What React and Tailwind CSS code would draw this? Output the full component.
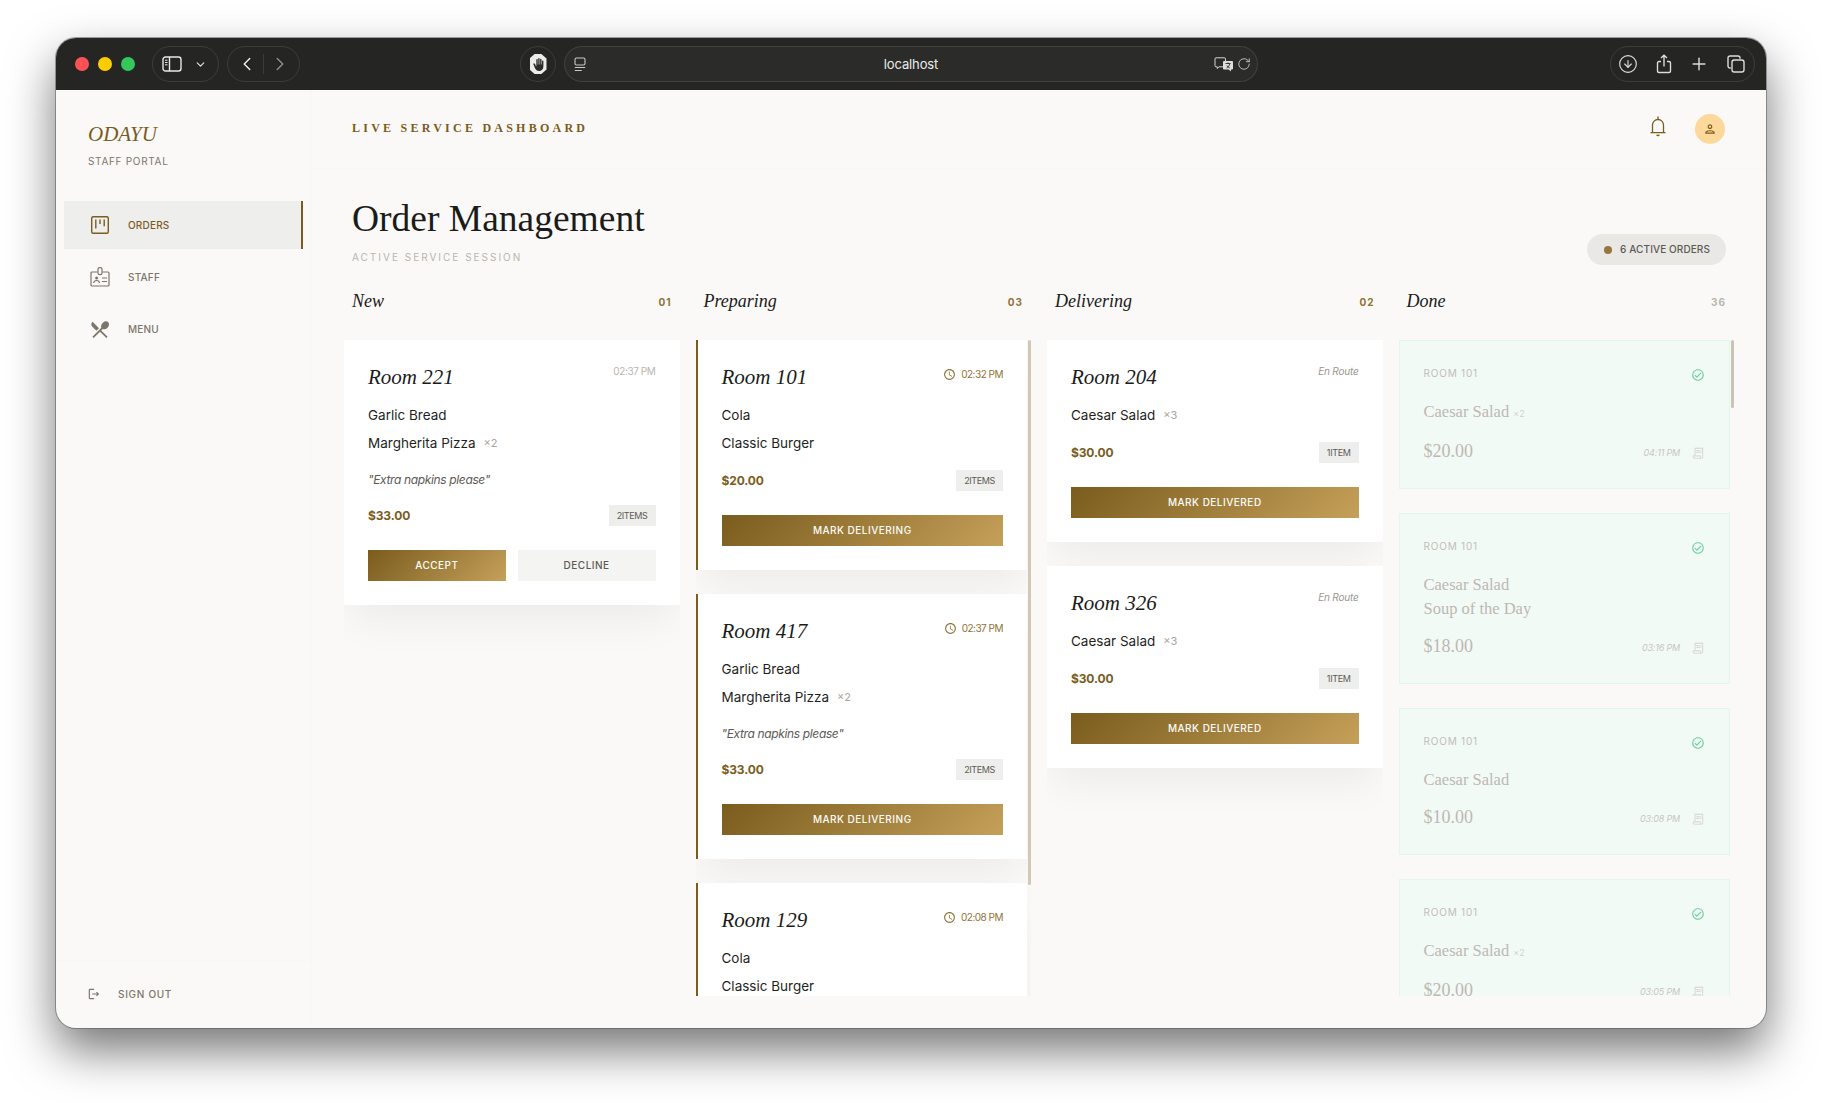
import React from "react";
import {
  ChevronDown,
  ChevronLeft,
  ChevronRight,
  CircleArrowDown,
  Plus,
  RotateCw,
} from "lucide-react";
import {
  MdBackHand,
  MdOutlineCheckCircle,
  MdOutlineLogout,
  MdOutlinePerson,
  MdOutlineReceiptLong,
  MdOutlineSchedule,
  MdRestaurantMenu,
} from "react-icons/md";

const serif = "font-['Liberation_Serif',serif]";

const KanbanIcon = () => (
  <svg width="20" height="20" viewBox="0 0 20 20" fill="none" stroke="currentColor">
    <rect x="1.7" y="1.7" width="16.6" height="16.6" rx="1.5" strokeWidth="1.4" />
    <path d="M5.8 4.6v9M10 4.6v4.4M14.2 4.6v6.6" strokeWidth="1.4" />
  </svg>
);

const BadgeIcon = () => (
  <svg width="22" height="22" viewBox="0 0 22 22" fill="none" stroke="currentColor" strokeWidth="1.2">
    <path d="M8.5 6H3a1 1 0 0 0-1 1v12a1 1 0 0 0 1 1h16a1 1 0 0 0 1-1V7a1 1 0 0 0-1-1h-5.5" />
    <rect x="9" y="1.6" width="4" height="7" rx="1.6" />
    <circle cx="7.6" cy="12" r="1.5" fill="currentColor" stroke="none" />
    <path d="M4.6 17c.3-1.8 1.5-2.5 3-2.5s2.700.7 3 2.500M13 12h5M13 15.500h5" />
  </svg>
);

const BellIcon = () => (
  <svg width="16" height="21" viewBox="0 0 16 21" fill="none" stroke="#7a5c1e" strokeWidth="1.300">
    <path d="M.5 16.700h15M2.500 16.700V9a5.500 5.500 0 0 1 11 0v7.700" />
    <path d="M8 1v2.400" strokeLinecap="round" />
    <path d="M6.800 18.800a1.300 1.300 0 0 0 2.400 0" strokeWidth="1.500" />
  </svg>
);

const SidebarIcon = () => (
  <svg width="20" height="16" viewBox="0 0 20 16" fill="none" stroke="#e8e8e6" strokeWidth="1.4">
    <rect x="1" y="1" width="18" height="14" rx="2.500" />
    <path d="M7.500 1v14" />
    <path d="M3 4.200h2.500M3 6.500h2.500M3 8.800h2.500" strokeWidth="1" />
  </svg>
);

const ReaderIcon = () => (
  <svg width="12" height="15" viewBox="0 0 12 15" fill="none" stroke="#c9c9c6" strokeWidth="1.100">
    <rect x="1" y="1" width="10" height="7" rx="1.500" />
    <path d="M.8 10.500h10.400M.8 13.500h7" />
  </svg>
);

const TranslateIcon = () => (
  <svg width="20" height="15" viewBox="0 0 20 15">
    <path d="M2 .8h8.500a1 1 0 0 1 1 1v7a1 1 0 0 1-1 1H5L3.200 11.500V9.800H2a1 1 0 0 1-1-1v-7a1 1 0 0 1 1-1z" fill="none" stroke="#d6d6d3" strokeWidth="1" />
    <path d="M10 4h8a1 1 0 0 1 1 1v6.500a1 1 0 0 1-1 1h-1v2l-2.300-2H10a1 1 0 0 1-1-1V5a1 1 0 0 1 1-1z" fill="#dededb" />
    <path d="M11.500 6.500h5M14 5.500v1M12.500 11c2-1 3-2.500 3.200-4.500M12.800 8.500c.6 1 1.600 1.900 3 2.500" fill="none" stroke="#2a2a28" strokeWidth=".9" />
  </svg>
);

const ShareIcon = () => (
  <svg width="16" height="20" viewBox="0 0 16 20" fill="none" stroke="#dcdcd9" strokeWidth="1.400">
    <path d="M5 7.500H3a1.500 1.500 0 0 0-1.500 1.500v8A1.500 1.500 0 0 0 3 18.500h10a1.500 1.500 0 0 0 1.500-1.500V9A1.500 1.500 0 0 0 13 7.500h-2" />
    <path d="M8 12.500V1.300M5 4l3-2.800L11 4" />
  </svg>
);

const TabsIcon = () => (
  <svg width="18" height="18" viewBox="0 0 18 18" fill="none" stroke="#dcdcd9" strokeWidth="1.400">
    <path d="M3.800 13H3a2 2 0 0 1-2-2V3a2 2 0 0 1 2-2h8a2 2 0 0 1 2 2v.800" />
    <rect x="5" y="5" width="12" height="12" rx="2.200" />
  </svg>
);

const HandIcon = () => (
  <span className="flex h-[20px] w-[17px] items-center justify-center bg-[#ececea] [clip-path:polygon(30%_0,70%_0,100%_22%,100%_78%,70%_100%,30%_100%,0_78%,0_22%)]">
    <MdBackHand size={13} color="#2a2a28" />
  </span>
);

const newOrders = [
  {
    room: "Room 221",
    time: "02:37 PM",
    items: [["Garlic Bread"], ["Margherita Pizza", "×2"]],
    note: "\"Extra napkins please\"",
    price: "$33.00",
    count: "2ITEMS",
  },
];

const preparing = [
  {
    room: "Room 101",
    time: "02:32 PM",
    items: [["Cola"], ["Classic Burger"]],
    price: "$20.00",
    count: "2ITEMS",
  },
  {
    room: "Room 417",
    time: "02:37 PM",
    items: [["Garlic Bread"], ["Margherita Pizza", "×2"]],
    note: "\"Extra napkins please\"",
    price: "$33.00",
    count: "2ITEMS",
  },
  {
    room: "Room 129",
    time: "02:08 PM",
    items: [["Cola"], ["Classic Burger"]],
    price: "$20.00",
    count: "2ITEMS",
  },
];

const delivering = [
  { room: "Room 204", items: [["Caesar Salad", "×3"]], price: "$30.00", count: "1ITEM" },
  { room: "Room 326", items: [["Caesar Salad", "×3"]], price: "$30.00", count: "1ITEM" },
];

const done = [
  { lines: [["Caesar Salad", "×2"]], price: "$20.00", time: "04:11 PM" },
  { lines: [["Caesar Salad"], ["Soup of the Day"]], price: "$18.00", time: "03:16 PM" },
  { lines: [["Caesar Salad"]], price: "$10.00", time: "03:08 PM" },
  { lines: [["Caesar Salad", "×2"]], price: "$20.00", time: "03:05 PM" },
];

function Gold({ children, className = "" }) {
  return (
    <button className={`h-[31px] bg-[linear-gradient(135deg,#7a5c1e,#c5a059)] text-[10px] font-medium tracking-[0.05em] text-[#fdfcf9] ${className}`}>
      {children}
    </button>
  );
}

function OrderCard({ order, variant }) {
  return (
    <div className={`shrink-0 bg-white shadow-[0_20px_40px_-6px_rgba(0,0,0,0.06)] p-6 ${variant === "preparing" ? "border-l-2 border-[#7a5c1e]" : ""}`}>
      <div className="flex items-start justify-between">
        <h3 className={`${serif} mt-px text-[21px] italic leading-6 text-[#1b1b1a]`}>{order.room}</h3>
        {variant === "new" && (
          <span className="text-[10px] leading-[15px] tracking-[-0.04em] text-[#b9b5ae]">{order.time}</span>
        )}
        {variant === "preparing" && (
          <span className="mt-[3px] flex items-center gap-[5px] text-[10px] leading-[15px] tracking-[-0.05em] text-[#8f7338]">
            <MdOutlineSchedule size={13} />
            {order.time}
          </span>
        )}
        {variant === "delivering" && (
          <span className="text-[10px] italic leading-[15px] tracking-[-0.02em] text-[#9b968e]">En Route</span>
        )}
      </div>
      <div className="mt-[16px] flex flex-col gap-2">
        {order.items.map(([name, qty]) => (
          <div key={name} className="flex items-center gap-2 text-[13.500px] leading-5 text-[#1f1f1e]">
            {name}
            {qty && <span className="text-[11px] text-[#a8a49d]">{qty}</span>}
          </div>
        ))}
      </div>
      {order.note && (
        <p className="mt-[19px] text-xs italic leading-4 tracking-[-0.03em] text-[#5c5a55]">{order.note}</p>
      )}
      <div className="mt-[17px] flex items-center justify-between">
        <span className="text-xs font-bold tracking-[-0.01em] text-[#7a5c1e]">{order.price}</span>
        <span className="flex h-[21px] items-center bg-[#eeeeec] px-2 text-[9px] tracking-[-0.04em] text-[#5c5a55]">{order.count}</span>
      </div>
      {variant === "new" && (
        <div className="mt-6 grid grid-cols-2 gap-3">
          <Gold>ACCEPT</Gold>
          <button className="h-[31px] bg-[#f4f4f2] text-[10px] font-medium tracking-[0.05em] text-[#5c5a55]">DECLINE</button>
        </div>
      )}
      {variant === "preparing" && <Gold className="mt-6 w-full">MARK DELIVERING</Gold>}
      {variant === "delivering" && <Gold className="mt-6 w-full">MARK DELIVERED</Gold>}
    </div>
  );
}

function DoneCard({ card }) {
  return (
    <div className="shrink-0 border border-[#e2f6ec] bg-[#f2faf6] px-6 pt-[25px] pb-[23px]">
      <div className="flex h-[15px] items-start justify-between">
        <span className="text-[10px] leading-[15px] tracking-[0.08em] text-[#c2bdb7]">ROOM 101</span>
        <MdOutlineCheckCircle size={14} className="mt-[2px] text-[#6fd0a3]" />
      </div>
      <div className="mt-[19px]">
        {card.lines.map(([name, qty]) => (
          <div key={name} className={`${serif} text-[16.500px] leading-6 text-[#bdb8b2]`}>
            {name}
            {qty && <span className="ml-1 font-['Inter',sans-serif] text-[9px] text-[#d5d2cd]">{qty}</span>}
          </div>
        ))}
      </div>
      <div className="mt-[11px] flex items-center justify-between">
        <span className={`${serif} text-lg leading-7 text-[#bdb8b2]`}>{card.price}</span>
        <span className="mt-1 flex items-center gap-[11px]">
          <span className="text-[9px] italic tracking-[-0.02em] text-[#c9c5bf]">{card.time}</span>
          <MdOutlineReceiptLong size={14} className="text-[#dcdcd6]" />
        </span>
      </div>
    </div>
  );
}

function ColumnHead({ title, count, muted }) {
  return (
    <div className="flex items-center justify-between px-2">
      <h2 className={`${serif} text-lg italic leading-6 text-[#1b1b1a]`}>{title}</h2>
      <span className={`mt-[3px] text-[10px] font-bold tracking-[0.1em] ${muted ? "text-[#b9b5ae]" : "text-[#8f7338]"}`}>{count}</span>
    </div>
  );
}

function NavItem({ icon, label, active }) {
  return (
    <a className={`flex h-12 items-center gap-[17px] pl-[25px] text-[10px] font-medium tracking-[0.02em] ${active ? "border-r-2 border-[#7a5c1e] bg-[#eeeeec] text-[#7a5c1e]" : "text-[#7d766b]"}`}>
      <span className="flex w-[22px] justify-center">{icon}</span>
      {label}
    </a>
  );
}

function TitleBar() {
  return (
    <div className="relative flex h-[52px] shrink-0 items-center bg-[#252523]">
      <div className="ml-[19px] flex gap-[9px]">
        <span className="h-[14px] w-[14px] rounded-full bg-[#ff5257]" />
        <span className="h-[14px] w-[14px] rounded-full bg-[#ffcc00]" />
        <span className="h-[14px] w-[14px] rounded-full bg-[#34c759]" />
      </div>
      <div className="ml-[17px] flex h-9 w-[67px] items-center justify-between rounded-full border border-white/10 pr-[11px] pl-[9px]">
        <SidebarIcon />
        <ChevronDown size={13} color="#e0e0de" strokeWidth={2.200} />
      </div>
      <div className="ml-[8px] flex h-9 w-[73px] items-center justify-between rounded-full border border-white/10 px-[8px]">
        <ChevronLeft size={22} color="#ecece9" strokeWidth={1.600} />
        <span className="h-5 w-px bg-white/10" />
        <ChevronRight size={22} color="#8b8b88" strokeWidth={1.600} />
      </div>
      <div className="ml-[220px] flex h-9 w-9 items-center justify-center rounded-full border border-white/10">
        <HandIcon />
      </div>
      <div className="relative ml-2 flex h-9 w-[694px] items-center justify-between rounded-full border border-white/10 bg-[#2b2b29] pr-[6px] pl-[9px]">
        <ReaderIcon />
        <span className="absolute inset-x-0 top-[9px] text-center text-[13px] leading-4 tracking-[-0.01em] text-[#ededeb]">localhost</span>
        <span className="flex items-center gap-[3px]">
          <TranslateIcon />
          <RotateCw size={14} color="#d6d6d3" strokeWidth={1.400} />
        </span>
      </div>
      <div className="ml-auto mr-[11px] flex h-9 w-[145px] items-center justify-between rounded-full border border-white/10 pr-[9px] pl-[7px]">
        <CircleArrowDown size={20} color="#dcdcd9" strokeWidth={1.400} />
        <ShareIcon />
        <Plus size={20} color="#dcdcd9" strokeWidth={1.700} />
        <TabsIcon />
      </div>
    </div>
  );
}

export default function App() {
  return (
    <div className="min-h-[1103px] bg-white pt-[38px] pl-[56px] font-['Inter',sans-serif]">
      <div className="flex h-[990px] w-[1710px] flex-col overflow-hidden rounded-[20px] bg-[#faf9f7] shadow-[0_0_0_1px_rgba(90,90,90,0.55),0_22px_48px_rgba(0,0,0,0.55)]">
        <TitleBar />
        <div className="flex min-h-0 flex-1">
          {/* Sidebar */}
          <aside className="flex w-64 shrink-0 flex-col border-r border-[#f8f7f4]">
            <div className="px-[32px] pt-[30px]">
              <div className={`${serif} text-[21px] italic leading-7 text-[#7a5c1e]`}>ODAYU</div>
              <div className="mt-[6px] text-[10px] leading-[15px] tracking-[0.07em] text-[#7d766b]">STAFF PORTAL</div>
            </div>
            <nav className="mt-[32px] flex flex-col gap-1 px-2">
              <NavItem active label="ORDERS" icon={<KanbanIcon />} />
              <NavItem label="STAFF" icon={<BadgeIcon />} />
              <NavItem label="MENU" icon={<MdRestaurantMenu size={23} />} />
            </nav>
            <div className="mt-auto flex h-[68px] items-start gap-[17px] border-t border-[#f8f7f4] pt-[26px] pl-[31px] text-[10px] font-medium leading-[15px] tracking-[0.07em] text-[#7d766b]">
              <MdOutlineLogout size={14} />
              SIGN OUT
            </div>
          </aside>

          {/* Main */}
          <main className="flex min-w-0 flex-1 flex-col">
            <header className="flex h-[79px] shrink-0 items-center justify-between border-b border-[#f8f7f4] pr-[41px] pl-[40px]">
              <span className={`${serif} -mt-[3px] text-xs font-bold tracking-[0.27em] text-[#7a5c1e]`}>LIVE SERVICE DASHBOARD</span>
              <div className="flex items-center gap-[29px]">
                <span className="-mt-[5px]"><BellIcon /></span>
                <span className="flex h-[30px] w-[30px] items-center justify-center rounded-full bg-[#fdd89b] text-[#7a5c1e]">
                  <MdOutlinePerson size={14} />
                </span>
              </div>
            </header>

            <div className="flex min-h-0 flex-1 flex-col px-10 pt-[30px] pb-[32px]">
              <div className="flex items-end justify-between">
                <div>
                  <h1 className={`${serif} text-[37.500px] leading-10 text-[#1b1b1a]`}>Order Management</h1>
                  <p className="mt-[11px] text-[10px] leading-[15px] tracking-[0.2em] text-[#b9b5ae]">ACTIVE SERVICE SESSION</p>
                </div>
                <div className="flex h-[31px] items-center gap-2 rounded-full bg-[#e9e8e5] pr-4 pl-[17px] text-[10px] font-medium tracking-[0.01em] text-[#5c5a55]">
                  <span className="h-2 w-2 rounded-full bg-[#957640]" />
                  6 ACTIVE ORDERS
                </div>
              </div>

              <div className="-mx-2 mt-6 grid min-h-0 flex-1 grid-cols-4 grid-rows-[24px_minmax(0,1fr)] gap-x-4 gap-y-[27px]">
                <ColumnHead title="New" count="01" />
                <ColumnHead title="Preparing" count="03" />
                <ColumnHead title="Delivering" count="02" />
                <ColumnHead title="Done" count="36" muted />

                <div className="flex min-h-0 flex-col gap-6 overflow-hidden">
                  {newOrders.map((o) => (
                    <OrderCard key={o.room} order={o} variant="new" />
                  ))}
                </div>
                <div className="relative flex min-h-0 flex-col gap-6 overflow-hidden pr-[4px]">
                  {preparing.map((o) => (
                    <OrderCard key={o.room} order={o} variant="preparing" />
                  ))}
                  <span className="absolute top-0 right-0 h-[545px] w-[3px] rounded-full bg-[#d3c7b5]" />
                </div>
                <div className="flex min-h-0 flex-col gap-6 overflow-hidden">
                  {delivering.map((o) => (
                    <OrderCard key={o.room} order={o} variant="delivering" />
                  ))}
                </div>
                <div className="relative flex min-h-0 flex-col gap-6 overflow-hidden pr-[4px]">
                  {done.map((c) => (
                    <DoneCard key={c.time} card={c} />
                  ))}
                  <span className="absolute top-0 right-0 h-[68px] w-[3px] rounded-full bg-[#cbc3b5]" />
                </div>
              </div>
            </div>
          </main>
        </div>
      </div>
    </div>
  );
}
